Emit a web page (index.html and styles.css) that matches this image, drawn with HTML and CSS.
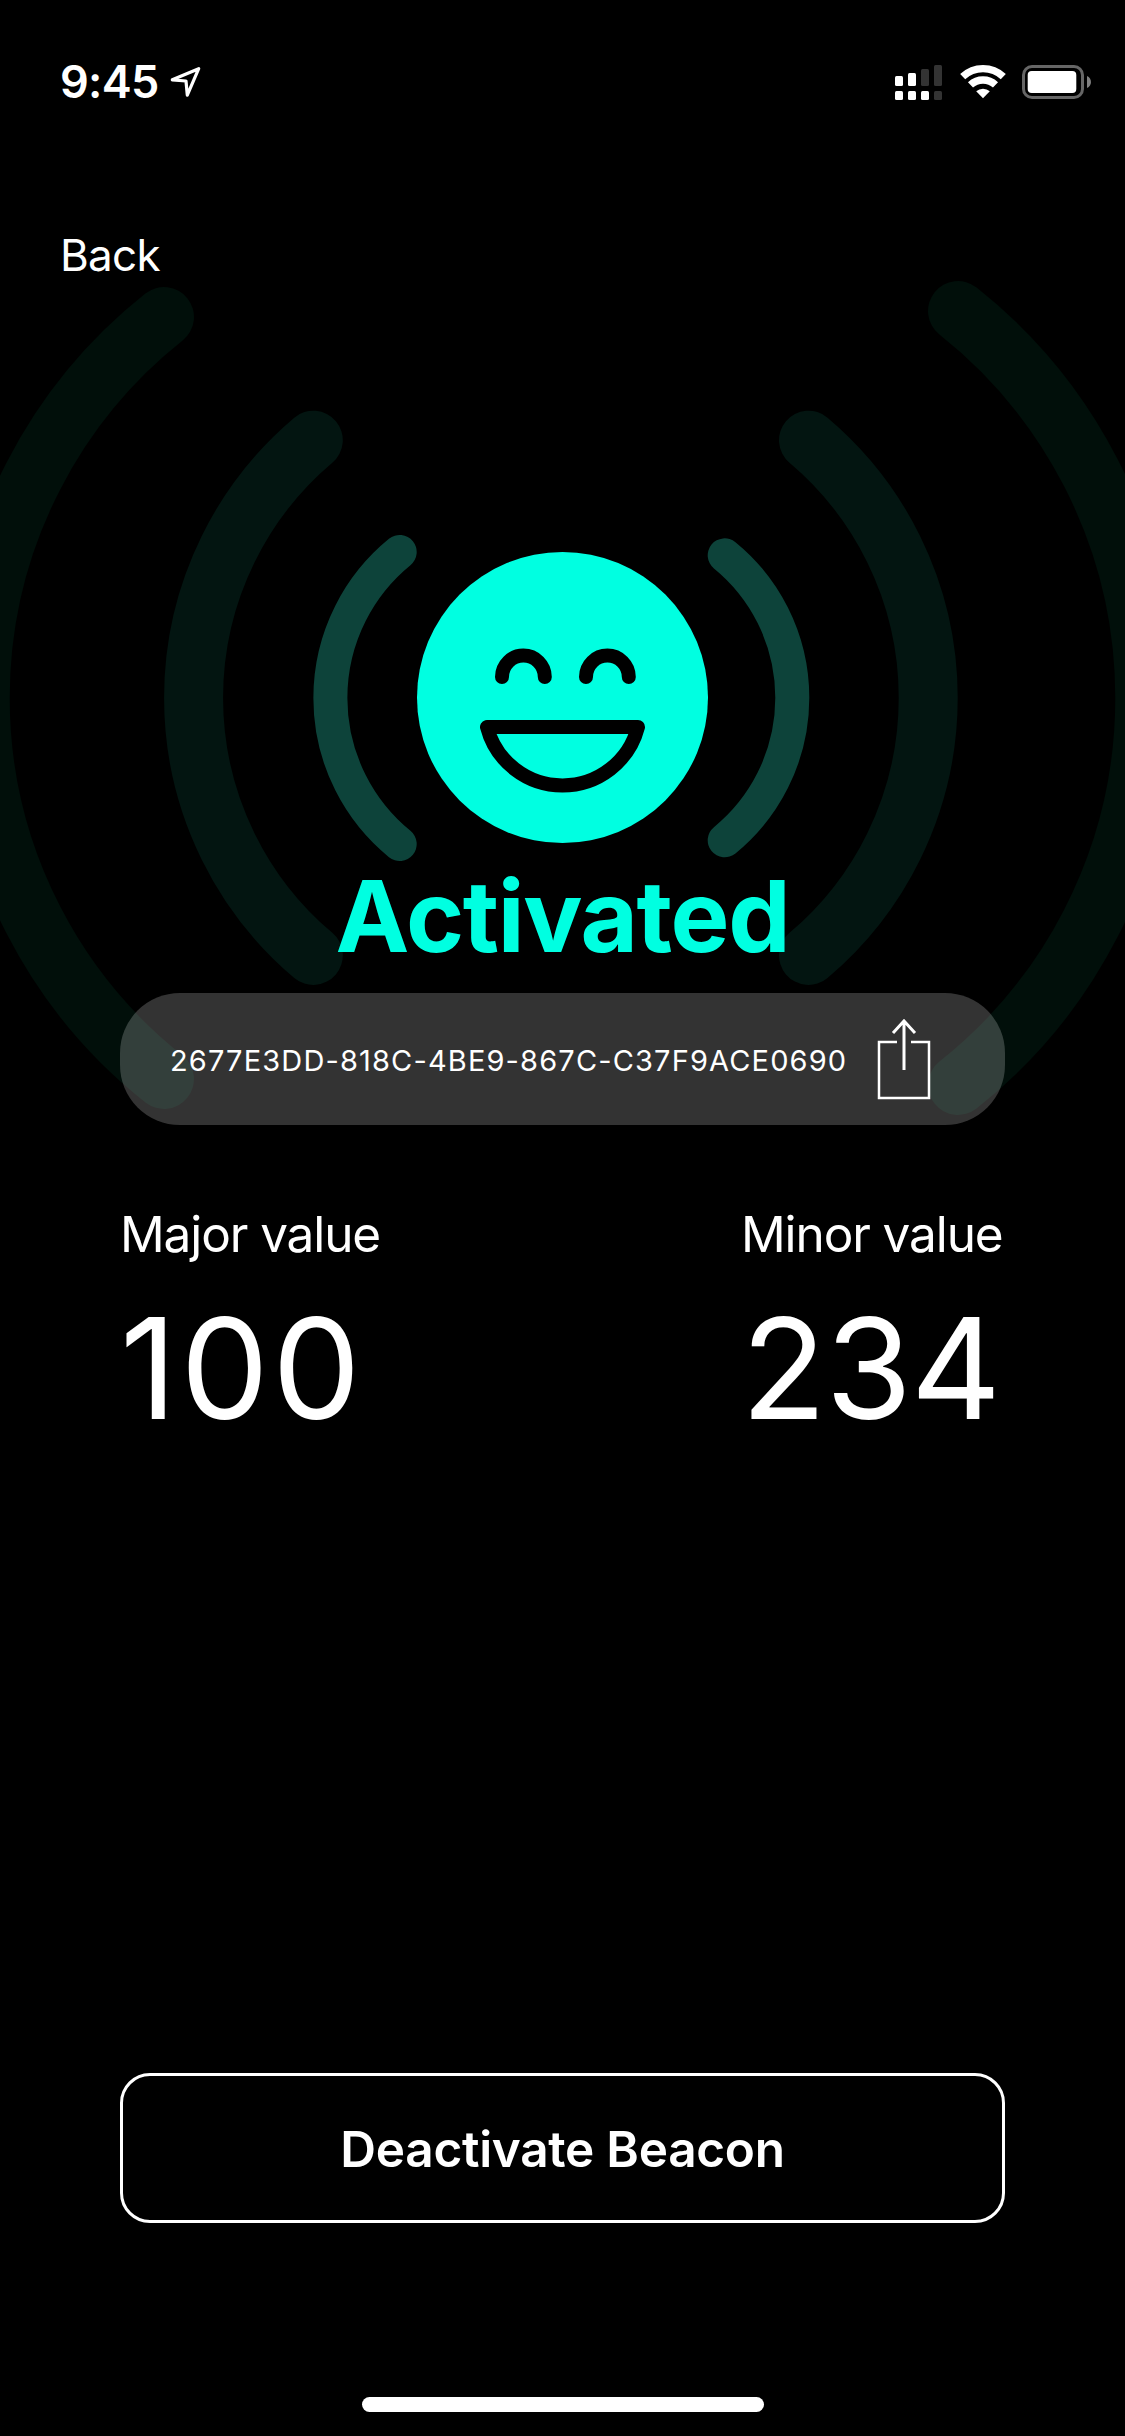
FILE: index.html
```html
<!DOCTYPE html>
<html lang="en">
	<head>
		<meta charset="UTF-8">
		<title>Beacon</title>
		<link rel="stylesheet" href="styles.css">
	</head>
	<body>
		<div class="screen">

			<!-- signal waves behind the content -->
			<svg class="waves" viewBox="0 0 1125 1200">
				<g class="wave-far">
					<path d="M164 317 A486 486 0 0 0 164 1079"/>
					<path d="M958 311 A493.5 493.5 0 0 1 958 1085"/>
				</g>
				<g class="wave-mid">
					<path d="M313.3 440.2 A337 337 0 0 0 313.3 955.4"/>
					<path d="M808.5 440.2 A337 337 0 0 1 808.5 955.4"/>
				</g>
				<g class="wave-near">
					<path d="M399.7 552 A188.4 188.4 0 0 0 399.7 844"/>
					<path d="M724.7 555.3 A184 184 0 0 1 724.7 840.3"/>
				</g>
			</svg>

			<div class="status">
				<span class="time">9:45</span>
				<svg class="location" width="32" height="36" viewBox="0 0 32 36">
					<path d="M2.3 15.8 L28.7 4.7 L17.3 31.2 L16 17 Z"/>
				</svg>
				<svg class="signal" width="47" height="36" viewBox="0 0 47 36">
					<rect x="0" y="12" width="8" height="10" rx="1.5"/>
					<rect x="13" y="9" width="8" height="13" rx="1.5"/>
					<rect class="off" x="26" y="5" width="8" height="17" rx="1.5"/>
					<rect class="off" x="39" y="1" width="8" height="21" rx="1.5"/>
					<rect x="0" y="27" width="8" height="9" rx="1.5"/>
					<rect x="13" y="27" width="8" height="9" rx="1.5"/>
					<rect x="26" y="27" width="8" height="9" rx="1.5"/>
					<rect class="off" x="39" y="27" width="8" height="9" rx="1.5"/>
				</svg>
				<svg class="wifi" width="46" height="36" viewBox="0 0 46 36">
					<path class="band" d="M2.7 12.6 A29.7 29.7 0 0 1 43.3 12.6"/>
					<path class="band" d="M10.5 20.9 A18.3 18.3 0 0 1 35.5 20.9"/>
					<path d="M23 34.3 L16.2 27.2 A10.4 10.4 0 0 1 29.8 27.2 Z"/>
				</svg>
				<svg class="battery" width="70" height="36" viewBox="0 0 70 36">
					<rect class="shell" x="1.5" y="2.5" width="59" height="31" rx="8.5"/>
					<rect class="level" x="5.7" y="7" width="48.6" height="22" rx="4"/>
					<path class="cap" d="M65 12 C70.3 14 70.3 22 65 24 Z"/>
				</svg>
			</div>

			<a class="back">Back</a>

			<svg class="face" width="291" height="291" viewBox="0 0 291 291">
				<circle cx="145.5" cy="145.5" r="145.5"/>
				<path d="M85 125 A21.4 21.4 0 0 1 127.8 125"/>
				<path d="M169 125 A21.4 21.4 0 0 1 211.8 125"/>
				<path d="M70 175 H221 A78 78 0 0 1 70 175 Z"/>
			</svg>
			<h1 class="state">Activated</h1>

			<div class="uuid">
				<span class="uuid-text">2677E3DD-818C-4BE9-867C-C37F9ACE0690</span>
				<svg class="share" width="54" height="82" viewBox="0 0 54 82">
					<path d="M20 24 H2 V80 H52 V24 H34"/>
					<path class="arrow" d="M27 52 V4 M16 15 L27 3 L38 15"/>
				</svg>
			</div>

			<div class="values">
				<div class="value major">
					<div class="label">Major value</div>
					<div class="number">100</div>
				</div>
				<div class="value minor">
					<div class="label">Minor value</div>
					<div class="number">234</div>
				</div>
			</div>

			<button class="deactivate">Deactivate Beacon</button>

			<div class="home"></div>
		</div>
	</body>
</html>
```

FILE: styles.css
```css
body {
	margin: 0;
	background: #000;
	color: #fff;
	font-family: Inter, "Liberation Sans", sans-serif;
}
.screen {
	position: relative;
	display: flex;
	flex-direction: column;
	align-items: center;
	width: 1125px;
	height: 2436px;
	overflow: hidden;
}

/* waves */
.waves {
	position: absolute;
	top: 0;
	left: 0;
	z-index: -1;
	width: 1125px;
	height: 1200px;
	fill: none;
	stroke-linecap: round;
}
.wave-far { stroke: #010f0a; stroke-width: 60; }
.wave-mid { stroke: #031511; stroke-width: 59; }
.wave-near { stroke: #0d433a; stroke-width: 34; }

/* status bar */
.status {
	display: flex;
	align-items: center;
	box-sizing: border-box;
	width: 100%;
	height: 132px;
	padding: 55px 33px 23px 60px;
	fill: #fff;
}
.time {
	width: 110px;
	font-size: 45px;
	font-weight: 600;
	letter-spacing: -.7px;
	line-height: 54px;
}
.location {
	fill: none;
	stroke: #fff;
	stroke-width: 3.2;
	stroke-linejoin: round;
}
.signal { margin-left: auto; }
.signal .off { fill: #333; }
.wifi { margin-left: 18px; }
.wifi .band {
	fill: none;
	stroke: #fff;
	stroke-width: 7.4;
}
.battery { margin-left: 16px; }
.battery .shell {
	fill: none;
	stroke: #666;
	stroke-width: 3;
}
.battery .cap { fill: #808080; }

.back {
	align-self: flex-start;
	margin: 96px 0 0 60px;
	font-size: 44px;
	letter-spacing: -.7px;
	line-height: 54px;
}

/* beacon state */
.face {
	margin-top: 270px;
	fill: none;
	stroke: #000;
	stroke-width: 14;
	stroke-linecap: round;
	stroke-linejoin: round;
}
.face circle {
	fill: #00ffe1;
	stroke: none;
}
.state {
	margin: 13px 0 0;
	color: #00ffe1;
	font-size: 99px;
	font-weight: 700;
	letter-spacing: -1.3px;
	line-height: 120px;
}
.uuid {
	display: flex;
	align-items: center;
	box-sizing: border-box;
	width: 885px;
	height: 132px;
	margin-top: 17px;
	padding: 0 74px 0 50px;
	border-radius: 60px;
	background: rgba(255, 255, 255, .2);
}
.uuid-text {
	padding-top: 3px;
	font-size: 29px;
	letter-spacing: 1.15px;
	line-height: 36px;
	white-space: nowrap;
}
.share {
	margin-left: auto;
	fill: none;
	stroke: #fff;
	stroke-width: 2.5;
}
.share .arrow { stroke-width: 3; }

/* major / minor */
.values {
	display: flex;
	justify-content: space-between;
	width: 885px;
	margin-top: 79px;
}
.minor { width: 264px; }
.label {
	font-size: 49.5px;
	letter-spacing: -1.1px;
	line-height: 60px;
	white-space: nowrap;
}
.number {
	margin-top: 19px;
	font-size: 140px;
	line-height: 170px;
}
.major .number { letter-spacing: 3.5px; }
.minor .number { letter-spacing: -1px; }

.deactivate {
	box-sizing: border-box;
	width: 885px;
	height: 150px;
	margin-top: 620px;
	padding: 1px 0 0;
	border: 3px solid #fff;
	border-radius: 30px;
	background: none;
	color: #fff;
	font-family: inherit;
	font-size: 49.5px;
	font-weight: 600;
	letter-spacing: -.27px;
}
.home {
	width: 402px;
	height: 15px;
	margin-top: 174px;
	border-radius: 8px;
	background: #fff;
}
```
